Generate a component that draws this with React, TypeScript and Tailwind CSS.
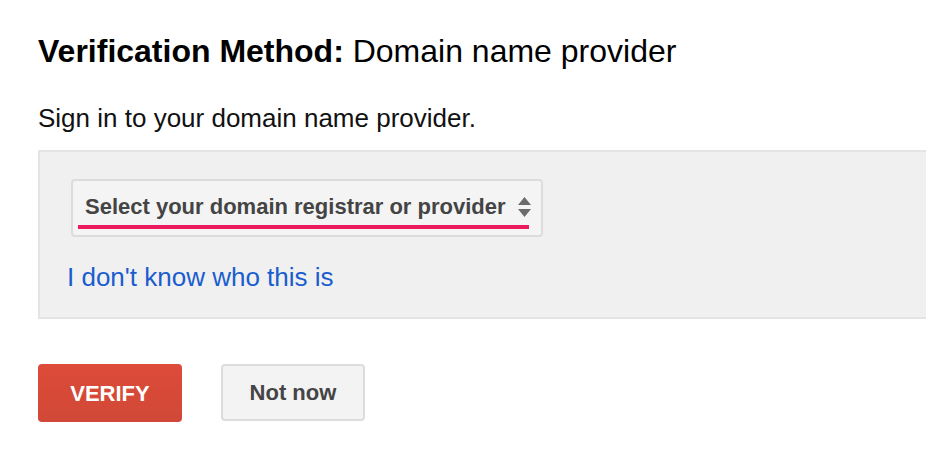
import React from "react";

function SortArrows() {
  return (
    <svg width="15" height="22" viewBox="0 0 15 22" className="shrink-0">
      <path d="M7.5 1 L14 9 L1 9 Z" fill="#6b6b6b" />
      <path d="M7.5 21 L14 13 L1 13 Z" fill="#6b6b6b" />
    </svg>
  );
}

export default function App() {
  return (
    <div
      className="min-h-[456px] w-[926px] overflow-hidden bg-white pl-[38px]"
      style={{ fontFamily: '"Liberation Sans", Arial, sans-serif' }}
    >
      <h1 className="pt-[33px] text-[32px] leading-[36px] text-black">
        <span className="font-bold">Verification Method:</span> Domain name provider
      </h1>

      <p className="mt-[34px] text-[26px] leading-[30px] text-[#111]">
        Sign in to your domain name provider.
      </p>

      {/* panel runs off the right edge, so no right border */}
      <div className="mt-[17px] -mr-[10px] border-y-2 border-l-2 border-[#e4e4e4] bg-[#f0f0f0] pb-[25px] pl-[27px] pt-[27px]">
        <div className="relative ml-[4px] flex h-[58px] w-[472px] items-center justify-between rounded-[4px] border-2 border-[#dcdcdc] bg-[#f4f4f4] pb-[3px] pl-[12px] pr-[9px]">
          <span className="text-[22px] font-bold text-[#444]">
            Select your domain registrar or provider
          </span>
          <SortArrows />
          {/* highlight underline */}
          <div className="absolute left-[5px] top-[44px] h-[4px] w-[451px] bg-[#ec1b5e]" />
        </div>

        <a href="#" className="mt-[25px] block text-[26px] leading-[30px] text-[#1a5dcf]">
          I don't know who this is
        </a>
      </div>

      <div className="mt-[45px] flex gap-[39px]">
        <button className="h-[58px] w-[144px] rounded-[4px] bg-gradient-to-b from-[#dd4b39] to-[#d14836] text-[22px] font-bold text-white">
          VERIFY
        </button>
        <button className="h-[57px] w-[144px] rounded-[4px] border-2 border-[#dcdcdc] bg-[#f3f3f3] text-[22px] font-bold text-[#444]">
          Not now
        </button>
      </div>
    </div>
  );
}
